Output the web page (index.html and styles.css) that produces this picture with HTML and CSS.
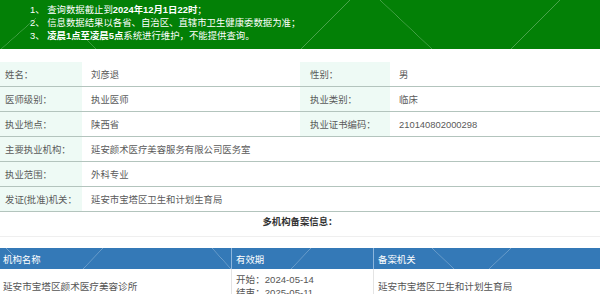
FILE: index.html
```html
<!DOCTYPE html>
<html lang="zh-CN">
<head>
<meta charset="utf-8">
<title>医师执业信息查询</title>
<link rel="stylesheet" href="styles.css">
</head>
<body>
<div class="notice">
  <p class="notice-line">1、 查询数据截止到<b>2024年12月1日22时</b>；</p>
  <p class="notice-line">2、 信息数据结果以各省、自治区、直辖市卫生健康委数据为准；</p>
  <p class="notice-line">3、 <b>凌晨1点至凌晨5点</b>系统进行维护，不能提供查询。</p>
</div>

<table class="info">
  <tr>
    <td class="lbl">姓名：</td><td class="val val-a">刘彦退</td>
    <td class="lbl lbl-b">性别：</td><td class="val">男</td>
  </tr>
  <tr>
    <td class="lbl">医师级别：</td><td class="val val-a">执业医师</td>
    <td class="lbl lbl-b">执业类别：</td><td class="val">临床</td>
  </tr>
  <tr>
    <td class="lbl">执业地点：</td><td class="val val-a">陕西省</td>
    <td class="lbl lbl-b">执业证书编码：</td><td class="val">210140802000298</td>
  </tr>
  <tr>
    <td class="lbl">主要执业机构：</td><td class="val" colspan="3">延安颜术医疗美容服务有限公司医务室</td>
  </tr>
  <tr>
    <td class="lbl">执业范围：</td><td class="val" colspan="3">外科专业</td>
  </tr>
  <tr>
    <td class="lbl">发证(批准)机关：</td><td class="val" colspan="3">延安市宝塔区卫生和计划生育局</td>
  </tr>
</table>

<div class="section-title">多机构备案信息：</div>

<table class="multi">
  <thead>
    <tr>
      <th class="c1">机构名称</th>
      <th class="c2">有效期</th>
      <th class="c3">备案机关</th>
    </tr>
  </thead>
  <tbody>
    <tr>
      <td class="c1">延安市宝塔区颜术医疗美容诊所</td>
      <td class="c2">开始：2024-05-14<br>结束：2025-05-11</td>
      <td class="c3">延安市宝塔区卫生和计划生育局</td>
    </tr>
  </tbody>
</table>
</body>
</html>
```
FILE: styles.css
```css
html, body {
  margin: 0;
  padding: 0;
  background: #ffffff;
}
body {
  font-family: "Liberation Sans", "Noto Sans CJK SC", sans-serif;
  font-size: 9.4px;
  color: #555555;
  width: 600px;
}

.notice {
  background-color: #038006;
  background-image:
    linear-gradient(to bottom right, transparent calc(50% - 0.6px), rgba(255,255,255,0.28) 50%, transparent calc(50% + 0.6px)),
    linear-gradient(to bottom right, transparent calc(50% - 0.6px), rgba(255,255,255,0.28) 50%, transparent calc(50% + 0.6px)),
    linear-gradient(to top right, transparent calc(50% - 0.6px), rgba(255,255,255,0.28) 50%, transparent calc(50% + 0.6px)),
    linear-gradient(to bottom right, transparent calc(50% - 0.6px), rgba(255,255,255,0.28) 50%, transparent calc(50% + 0.6px)),
    linear-gradient(to top right, transparent calc(50% - 0.6px), rgba(255,255,255,0.22) 50%, transparent calc(50% + 0.6px));
  background-position: 0 18px, 300px 0, 380px 0, 510px 0, 80px 33px;
  background-size: 36px 32px, 50px 50px, 53px 50px, 50px 50px, 17px 17px;
  background-repeat: no-repeat;
  color: #ffffff;
  padding: 3px 0 7px 30px;
  height: 39px;
}
.notice-line {
  margin: 0;
  line-height: 13px;
  white-space: nowrap;
}
.notice-line b {
  font-weight: bold;
}

.info {
  margin-top: 13px;
  width: 600px;
  border-collapse: collapse;
  table-layout: fixed;
}
.info td {
  height: 24px;
  padding: 0;
  border-bottom: 1px solid #b3c4bd;
  line-height: 13px;
  white-space: nowrap;
  color: #5a5a5a;
}
.info .lbl {
  width: 77px;
  padding-left: 5px;
  background: #eefaf5;
}
.info .lbl-b {
  width: 80px;
  padding-left: 10px;
}
.info .val {
  padding-left: 9px;
}
.info .val-a {
  width: 209px;
}

.section-title {
  text-align: center;
  font-weight: bold;
  color: #333333;
  line-height: 13px;
  padding-top: 3px;
  padding-bottom: 8px;
  border-bottom: 1px solid #efefef;
  height: 13px;
}

.multi {
  margin-top: 11px;
  width: 600px;
  border-collapse: collapse;
  table-layout: fixed;
}
.multi th {
  height: 21px;
  padding: 0 0 0 4px;
  text-align: left;
  font-weight: normal;
  color: #ffffff;
  background-color: #3479b7;
  border-left: 1px solid #8db6dd;
  white-space: nowrap;
}
.multi thead tr {
  background-color: #3479b7;
}
.multi th.c1 {
  border-left: 0;
  padding-left: 3px;
  background-image:
    linear-gradient(to top right, transparent calc(50% - 0.6px), rgba(255,255,255,0.3) 50%, transparent calc(50% + 0.6px)),
    linear-gradient(to bottom right, transparent calc(50% - 0.6px), rgba(255,255,255,0.3) 50%, transparent calc(50% + 0.6px)),
    linear-gradient(to top right, transparent calc(50% - 0.6px), rgba(255,255,255,0.3) 50%, transparent calc(50% + 0.6px));
  background-position: 6px 0, 83px 0, 212px 0;
  background-size: 10px 10px, 20px 21px, 19px 21px;
  background-repeat: no-repeat;
}
.multi th.c2 {
  background-image:
    linear-gradient(to bottom right, transparent calc(50% - 0.6px), rgba(255,255,255,0.3) 50%, transparent calc(50% + 0.6px));
  background-position: 59px 0;
  background-size: 20px 21px;
  background-repeat: no-repeat;
}
.multi th.c3 {
  background-image:
    linear-gradient(to top right, transparent calc(50% - 0.6px), rgba(255,255,255,0.3) 50%, transparent calc(50% + 0.6px)),
    linear-gradient(to bottom right, transparent calc(50% - 0.6px), rgba(255,255,255,0.3) 50%, transparent calc(50% + 0.6px));
  background-position: 58px 0, 115px 0;
  background-size: 22px 21px, 22px 21px;
  background-repeat: no-repeat;
}
.multi .c1 { width: 228px; }
.multi .c2 { width: 137px; }
.multi td {
  padding: 4px 0 5px 4px;
  line-height: 13px;
  color: #555555;
  border-left: 1px solid #e4e4e4;
  white-space: nowrap;
  vertical-align: middle;
  font-size: 9.6px;
}
.multi td.c1 {
  border-left: 0;
  padding-left: 3px;
}
```
